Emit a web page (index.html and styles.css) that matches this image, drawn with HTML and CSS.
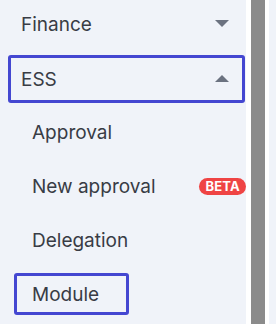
FILE: index.html
```html
<!DOCTYPE html>
<html lang="en">
<head>
  <meta charset="UTF-8" />
  <title>Menu</title>
  <link rel="stylesheet" href="styles.css">
</head>
<body>
  <div class="layout">
    <nav class="sidebar">
      <div class="group">
        <span>Finance</span>
        <svg class="caret" width="14" height="8" viewBox="0 0 14 8"><path d="M0 0h14L7 7z" /></svg>
      </div>
      <div class="group active">
        <span>ESS</span>
        <svg class="caret" width="14" height="8" viewBox="0 0 14 8"><path d="M0 7h14L7 0z" /></svg>
      </div>
      <ul class="submenu">
        <li class="item">Approval</li>
        <li class="item">New approval <span class="badge">BETA</span></li>
        <li class="item">Delegation</li>
        <li class="item selected">Module</li>
      </ul>
    </nav>
    <div class="scrollbar"><div class="thumb"></div></div>
    <div class="main"></div>
  </div>
</body>
</html>
```

FILE: styles.css
```css
body {
  margin: 0;
  font-family: Inter, "Noto Sans", sans-serif;
  background-color: #fff;
}

.layout {
  display: flex;
  height: 324px;
  overflow: hidden;
}

.sidebar {
  width: 246px;
  flex-shrink: 0;
  background-color: #f0f3f9;
  padding: 0 1px 0 8px;
  box-sizing: border-box;
  color: #383c45;
  font-size: 19px;
  overflow: hidden;
}

.group {
  height: 48px;
  box-sizing: border-box;
  display: flex;
  align-items: center;
  justify-content: space-between;
  padding: 0 13px 0 10px;
  border: 3px solid transparent;
  border-radius: 3px;
  margin-bottom: 7px;
}

.group.active {
  border-color: #4447d1;
  margin-bottom: 8px;
}

.caret path {
  fill: #6b7280;
}

.submenu {
  list-style: none;
  margin: 0;
  padding: 0 0 0 6px;
}

.item {
  height: 42px;
  box-sizing: border-box;
  display: flex;
  align-items: center;
  justify-content: space-between;
  padding-left: 15px;
  border: 3px solid transparent;
  border-radius: 3px;
  margin-bottom: 12px;
}

.item.selected {
  width: 115px;
  border-color: #4447d1;
}

.badge {
  background-color: #ef4444;
  color: white;
  font-size: 13px;
  font-weight: 700;
  line-height: 17px;
  padding: 0 6px;
  border-radius: 9px;
  margin-right: -4px;
  letter-spacing: 0.2px;
}

.scrollbar {
  width: 23px;
  flex-shrink: 0;
  padding: 0 4px 0 5px;
  box-sizing: border-box;
  background-color: #fff;
}

.thumb {
  height: 100%;
  background-color: #8b8b8b;
}

.main {
  flex: 1;
  background-color: #f0f3f9;
}
```
